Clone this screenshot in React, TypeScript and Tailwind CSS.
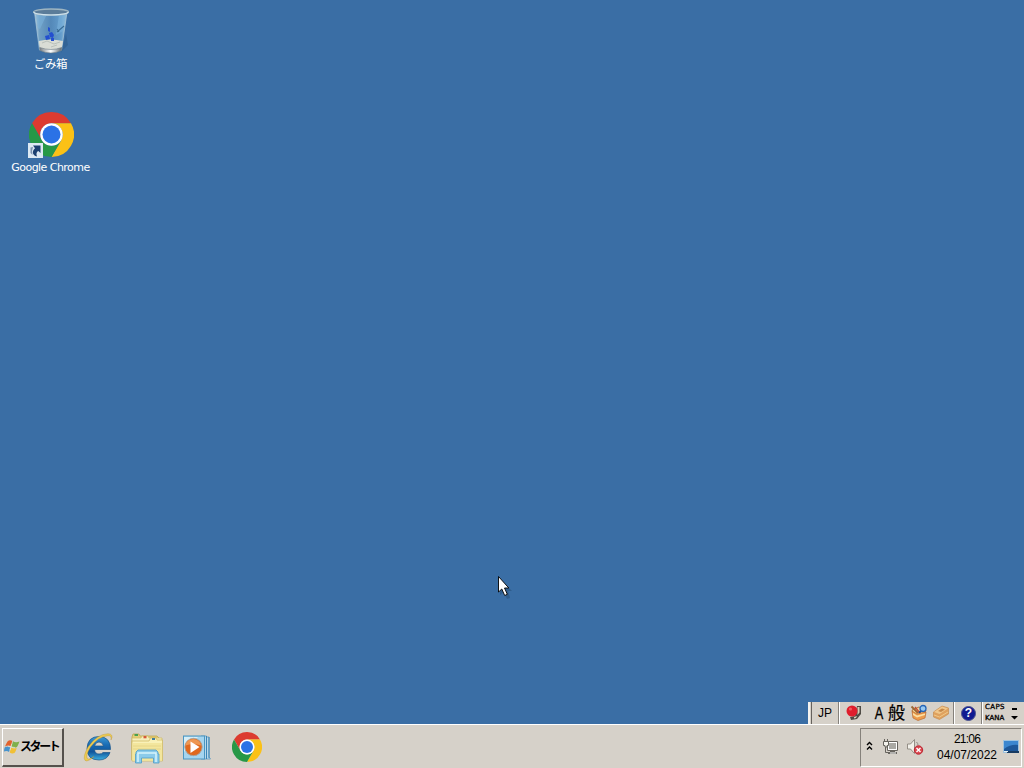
import React from "react";
import clsx from "clsx";

const ChromeIcon = ({ className }: { className?: string }) => (
  <svg viewBox="0 0 48 48" className={className}>
    <path fill="#dc3b30" d="M24 12H44.785A24 24 0 0 0 3.215 12L13.608 30A12 12 0 0 1 24 12Z" />
    <path fill="#fbc116" d="M44.785 12A24 24 0 0 1 24 48L34.392 30A12 12 0 0 0 24 12Z" />
    <path fill="#279847" d="M3.215 12A24 24 0 0 0 24 48L34.392 30A12 12 0 0 1 13.608 30Z" />
    <circle cx="24" cy="24" r="12" fill="#fff" />
    <circle cx="24" cy="24" r="9.6" fill="#2b72e6" />
  </svg>
);

const ShortcutArrow = ({ className }: { className?: string }) => (
  <svg viewBox="0 0 15 15" className={className}>
    <rect width="15" height="15" fill="#dde9f3" />
    <path fill="#1c4070" d="M5 2.500H12.500V10L10.300 8C8.500 9 8 10.500 9 13.500C4.500 12.500 3.500 8.500 7 5.200Z" />
    <path fill="#1c4070" d="M2.500 4.500L5 4L4 8L4.500 12L2.500 10Z" opacity=".5" />
  </svg>
);

const RecycleBinIcon = () => (
  <svg viewBox="0 0 40 48" className="h-12 w-10">
    <defs>
      <linearGradient id="bin" x1="0" x2="1">
        <stop offset="0" stopColor="#b4cfdf" />
        <stop offset=".16" stopColor="#6f9fc4" />
        <stop offset=".5" stopColor="#5488b8" />
        <stop offset=".82" stopColor="#649dcc" />
        <stop offset="1" stopColor="#a9c9dc" />
      </linearGradient>
      <linearGradient id="base" x1="0" x2="1">
        <stop offset="0" stopColor="#777d82" />
        <stop offset=".5" stopColor="#fff" />
        <stop offset="1" stopColor="#62696e" />
      </linearGradient>
    </defs>
    <path fill="#254f7c" opacity=".35" d="M31 44L37 38L35 27L30 46Z" />
    <path fill="url(#bin)" stroke="#a5c4d8" strokeWidth=".8" d="M3.500 5L8.500 43Q20 47 30.500 43L36 5Z" />
    <path fill="#79b1db" opacity=".6" d="M5 8L16 7L9 22L7 21ZM28 8L35 8L32 24L25 28Z" />
    <path fill="#d9dcd5" d="M7.800 34Q19 31 32 34L30.500 42Q20 45 8.700 41.500Z" />
    <path fill="none" stroke="#b9c0ba" d="M11 36L16 34L23 37L29 35M20 40L26 38" />
    <path fill="#234fd0" d="M17 20L19 21V25L17 24ZM18 26L21 25L23 28L22 31L19 30ZM14 29L18 28L19 32L15 33ZM20 31H23V34H20Z" />
    <path fill="none" stroke="#386b94" strokeWidth="1.100" d="M26 25L33 19M26 22L28 25" />
    <path fill="url(#base)" stroke="#6b7b85" strokeWidth=".6" d="M8.700 40.500Q20 44.500 30.800 40.500L30.300 43.500Q20 48.500 9 43.500Z" />
    <ellipse cx="20" cy="5" rx="17.500" ry="3" fill="#5b7c99" stroke="#9eb5c1" strokeWidth="1.300" />
    <path fill="none" stroke="#d0e3ee" strokeWidth="1.200" d="M3 5Q3 7.500 20 8Q37 7.500 37 5" />
  </svg>
);

const WindowsFlag = () => (
  <svg viewBox="0 0 16 16" className="h-4 w-4 shrink-0">
    <path fill="#e2622c" d="M3.500 2.500Q5.500 .3 8.300 1.800Q7.600 4.300 6.700 7.200Q4.500 5.700 1 7.500Q2 5 3.500 2.500Z" />
    <path fill="#7fb04b" d="M9 2.200Q11.500 4 15.500 2.500Q14.500 5.500 13 8Q10 9.200 7.400 7.600Q8.500 5 9 2.200Z" />
    <path fill="#4793cc" d="M.8 8.300Q4 6.800 6.500 8L5 13Q3 11.500 0 12.500Q0 10 .8 8.300Z" />
    <path fill="#f1c035" d="M7.200 8.500Q10 10 12.700 9Q12 12 10.500 14Q8 15.200 5.700 13.500Z" />
    <path stroke="#f8efd9" strokeWidth=".8" opacity=".7" d="M7.500 5L6 11M4 7.500L11 8.500" />
  </svg>
);

const IeIcon = () => (
  <svg viewBox="0 0 32 32" className="h-8 w-8">
    <defs>
      <linearGradient id="ie" x1="0" x2="0" y1="0" y2="1">
        <stop offset="0" stopColor="#3f9bd6" />
        <stop offset=".35" stopColor="#1a6db5" />
        <stop offset=".65" stopColor="#10559b" />
        <stop offset="1" stopColor="#3cb0e0" />
      </linearGradient>
    </defs>
    <path fill="url(#ie)" stroke="#155389" strokeWidth=".7" fillRule="evenodd" d="M28.500 18.500H12.500Q13 23 17 23Q20 23 21 21.500H28Q25.500 29 17 29Q5 29 5 17.500Q5.500 5.500 17 5.500Q28.700 5.800 28.500 18.500ZM12.500 15H21.500Q20.500 11 17 11Q13.500 11 12.500 15Z" />
    <path fill="#edcb50" stroke="#be942e" strokeWidth=".4" d="M29 9Q30 4.500 26 4.700Q16 5.500 8.500 16Q3 25 5.500 27.700Q7.500 29 12 25.500Q5.500 31.500 3 29.300Q.5 26 6 16Q15 3 26 2.700Q32 3 29 9Z" />
  </svg>
);

const ExplorerIcon = () => (
  <svg viewBox="0 0 34 34" className="h-[34px] w-[34px]">
    <path fill="#e6cf76" stroke="#bca650" strokeWidth=".8" d="M2 5L3 2H9L10 4H27L29 6V28H2Z" />
    <path fill="#49a050" d="M4.500 2H8V4H4.500Z" />
    <path fill="#f6eebb" stroke="#cfb962" strokeWidth=".7" d="M2 6H11L12 4H18L19 6H32V28H2Z" />
    <path fill="#d4593b" d="M13.500 4H16.500V6.300H13.500Z" />
    <path fill="#f9f1b8" stroke="#cdb65d" strokeWidth=".7" d="M2 9H19L20.500 6H26L27 8H32.500V29H2Z" />
    <path fill="#3f7c9e" d="M22 6H25V8H22Z" />
    <path fill="#f3e69d" d="M2.500 11H32V28.500H2.500Z" />
    <path stroke="#e7d688" d="M3 14H31M3 17H31" />
    <path fill="#8bcbea" stroke="#4c9cc9" strokeWidth=".8" d="M6 20L8 18H26L28 20V22H29V31H23.500V26H11.500V31H5.500V22H6Z" />
    <path fill="none" stroke="#d7f5fc" strokeWidth="1.500" d="M8 30V21H26V30" />
  </svg>
);

const MediaPlayerIcon = () => (
  <svg viewBox="0 0 30 28" className="h-7 w-[30px]">
    <path fill="#b9d9ea" stroke="#4b8fbb" strokeWidth=".7" d="M20 2H25.500V3H28V23L29.500 25H20Z" />
    <path stroke="#3c86b7" strokeWidth="1" d="M25.500 2V25M28 3V24" />
    <rect x="2.500" y="2" width="21" height="23" fill="#a5d5ef" stroke="#4b96c2" />
    <path fill="#d6eef7" d="M3 3H17L3 18Z" />
    <circle cx="12.500" cy="13" r="8.700" fill="#e0681d" stroke="#a6a4a0" strokeWidth=".9" />
    <path fill="#ee9752" d="M4.500 11.500Q5.500 5 12.500 5Q19.500 6 20 11.500Q12 9 4.500 11.500Z" />
    <path fill="#fff" d="M9.500 7.500L18.500 13L9.500 19Z" />
  </svg>
);

const ImeIcon = () => (
  <svg viewBox="0 0 18 18" className="h-[18px] w-[18px]">
    <path fill="#4f4b45" d="M12 2H16V10L12 15L6 16L5 13L10 12Z" />
    <path fill="#d8cfb7" d="M12.500 3H14.500V8.500L12.500 11V8ZM9 13L12 12L11 14L9 14.500Z" />
    <circle cx="7" cy="7" r="5.500" fill="#df1e2c" />
    <circle cx="5.500" cy="5" r="1.600" fill="#f35a61" />
  </svg>
);

const ToolsIcon = () => (
  <svg viewBox="0 0 18 18" className="h-[18px] w-[18px]">
    <path fill="#f5d69b" stroke="#a96227" strokeWidth=".8" d="M2 6L9 3L16 6L15 9L8 11L3 9Z" />
    <path stroke="#9b6631" strokeWidth="1.800" d="M1.500 2.500L8 9" />
    <path stroke="#c44935" strokeWidth="1.200" d="M5 3L10 9" />
    <path stroke="#244985" strokeWidth="2" d="M9 9L12 6" />
    <circle cx="13" cy="4.500" r="3" fill="#98c8ef" stroke="#2464b6" strokeWidth="1.300" />
    <path fill="#ee9c4c" stroke="#b66c35" strokeWidth=".7" d="M2 7L7 10L16 8L15 14L8 16.500L3 14Z" />
    <path fill="#fbe0a6" d="M3 9L7 11.500L15 9.500V11L7 13.500L3 11Z" />
  </svg>
);

const PadIcon = () => (
  <svg viewBox="0 0 18 18" className="h-[18px] w-[18px]">
    <path fill="#dfa15e" stroke="#c98f51" strokeWidth=".7" d="M1.500 8L10 2L16.500 4V10L7.500 15.500L1.500 13Z" />
    <path fill="#f0c78b" d="M2 8L10 2.500L16 4.500L7.500 10Z" />
    <path fill="#c58849" d="M6 7L10 4.500L13 5.500L9 8Z" />
    <path stroke="#f0c888" d="M2 11L7.500 13L16 8" fill="none" />
  </svg>
);

const NetworkIcon = () => (
  <svg viewBox="0 0 17 17" className="h-[17px] w-[17px]">
    <path fill="#fff" stroke="#67645e" d="M5.500 2.500H15.500V11.500H5.500Z" />
    <path fill="#aaa9a4" d="M7 4H14V10H7Z" />
    <path fill="#67645e" d="M8 12H13V13H15V15H6V13H8Z" />
    <path fill="#f4f3ed" stroke="#67645e" d="M1.500 2.500H6.500V6.500H5V8H3V6.500H1.500Z" />
    <path fill="none" stroke="#67645e" d="M2.500 0V2M5.500 0V2M3.500 8V13.500H7" />
    <path stroke="#fff" d="M8 14H14" />
  </svg>
);

const VolumeIcon = () => (
  <svg viewBox="0 0 18 18" className="h-[18px] w-[18px]">
    <path fill="#f3f1ea" stroke="#8b867e" strokeWidth=".9" d="M1.500 6H4.500L8.500 1.500V15.500L4.500 11H1.500Z" />
    <path fill="none" stroke="#8c8981" d="M10.500 4Q12 5.500 12 7" />
    <circle cx="12.500" cy="12" r="4.200" fill="#dc4850" stroke="#b92631" />
    <path stroke="#fff" strokeWidth="1.400" d="M10.500 10L14.500 14M14.500 10L10.500 14" />
  </svg>
);

const ShowDesktopIcon = () => (
  <svg viewBox="0 0 16 16" className="h-4 w-4">
    <path fill="#9fc3df" d="M0 1H16V14H0Z" />
    <path fill="#1d5799" d="M1 2H15V13H1Z" />
    <path fill="#3b86cf" d="M1 2H15V6Q8 5 1 10Z" />
    <path fill="#173b62" d="M4 12H16V14H4Z" />
    <path fill="#e6f0f4" d="M1 12H5V13H1Z" />
  </svg>
);

const Divider = () => <div className="h-[22px] w-0.5 shrink-0 border-l border-[#85817b] bg-white" />;

const LanguageBar = () => (
  <div className="absolute right-0 bottom-0 flex h-[22px] w-[216px] items-center bg-[#d6d1c9] text-black">
    <div className="h-full w-0.5 bg-[#f5f3ef]" />
    <div className="ml-px h-full w-px bg-[#66625d]" />
    <span className="w-[26px] text-center text-[12px] leading-none">JP</span>
    <Divider />
    <div className="ml-[5px] shrink-0"><ImeIcon /></div>
    <span className="ml-[10px] w-3 origin-center scale-x-75 text-center text-[17px] leading-none [-webkit-text-stroke:0.3px_black]">A</span>
    <span className="ml-[3px] text-[17px] leading-none [-webkit-text-stroke:0.2px_black]">般</span>
    <div className="ml-[5px] shrink-0"><ToolsIcon /></div>
    <div className="ml-[4px] shrink-0"><PadIcon /></div>
    <div className="ml-[3px]"><Divider /></div>
    <div className="ml-[6px] flex h-[15px] w-[15px] shrink-0 items-center justify-center rounded-full border border-[#4b538d] bg-[#101b91] text-[12px] leading-none font-bold text-white">?</div>
    <div className="ml-[5px]"><Divider /></div>
    <div className="ml-[2px] flex w-[22px] shrink-0 flex-col font-['DejaVu_Sans',sans-serif] text-[7px] leading-[11px] [-webkit-text-stroke:0.3px_black]">
      <span className="tracking-[0.4px]">CAPS</span>
      <span>KANA</span>
    </div>
    <svg viewBox="0 0 7 16" className="ml-[4px] h-4 w-[7px] shrink-0">
      <path d="M1 3H6V5H1ZM0 11H7L3.500 14.500Z" />
    </svg>
  </div>
);

const DesktopIcon = ({ label, className, children }: { label: string; className?: string; children: React.ReactNode }) => (
  <div className="flex w-[101px] flex-col items-center">
    {children}
    <span className={clsx("whitespace-nowrap text-white", className)}>{label}</span>
  </div>
);

const Taskbar = () => (
  <div className="flex h-11 shrink-0 items-center border-t border-white bg-[#d6d1c9] text-black">
    <button className="mt-px ml-0.5 flex h-[39px] w-[62px] shrink-0 items-center border-t border-r-2 border-b-2 border-l border-t-white border-r-[#55514c] border-b-[#55514c] border-l-white pl-px">
      <WindowsFlag />
      <span className="text-[12px] leading-none font-bold tracking-[-2.4px] whitespace-nowrap">スタート</span>
    </button>
    <div className="ml-[18px] flex items-center">
      <IeIcon />
      <div className="mt-1 ml-4"><ExplorerIcon /></div>
      <div className="mt-0.5 ml-[17px]"><MediaPlayerIcon /></div>
      <ChromeIcon className="ml-[21px] h-[30px] w-[30px]" />
    </div>
    <div className="mt-px mr-0.5 ml-auto flex h-[39px] w-[162px] items-center border border-t-[#85817b] border-r-white border-b-white border-l-[#85817b]">
      <svg viewBox="0 0 7 10" className="mb-0.5 ml-[5px] h-2.5 w-[7px]">
        <path fill="none" stroke="#000" strokeWidth="1.400" d="M1 4L3.500 1.500L6 4M1 8.500L3.500 6L6 8.500" />
      </svg>
      <div className="ml-[9px] shrink-0"><NetworkIcon /></div>
      <div className="ml-[7px] shrink-0"><VolumeIcon /></div>
      <div className="ml-[12px] flex w-[62px] shrink-0 flex-col items-center text-[12px] leading-4 whitespace-nowrap">
        <span className="tracking-[-0.8px]">21:06</span>
        <span>04/07/2022</span>
      </div>
      <div className="ml-[5px] shrink-0"><ShowDesktopIcon /></div>
    </div>
  </div>
);

const App = () => (
  <div className="flex h-screen w-screen flex-col overflow-hidden bg-[#3a6ea5] font-['Liberation_Sans','Noto_Sans_CJK_JP',sans-serif]">
    <div className="relative flex-1">
      <div className="flex flex-col gap-[39px] pt-[7px]">
        <DesktopIcon label="ごみ箱" className="text-[11.5px] leading-[18px] tracking-[-0.3px]">
          <RecycleBinIcon />
        </DesktopIcon>
        <DesktopIcon label="Google Chrome" className="pt-px font-['DejaVu_Sans',sans-serif] text-[11px] leading-5 tracking-[-0.55px]">
          <div className="relative ml-px">
            <ChromeIcon className="h-[45px] w-[45px]" />
            <ShortcutArrow className="absolute bottom-[-1px] -left-px h-[15px] w-[15px]" />
          </div>
        </DesktopIcon>
      </div>
      <svg viewBox="0 0 16 24" className="absolute top-[575px] left-[497px] h-6 w-4">
        <path fill="#244b73" opacity=".5" d="M3 4V20L7 17L10 24L13 23L11 16H15Z" />
        <path fill="#fff" stroke="#000" strokeWidth=".9" d="M1.500 1.500V17L4.800 14L7.700 20.500L10.300 19.300L7.500 13H11.800Z" />
      </svg>
      <LanguageBar />
    </div>
    <Taskbar />
  </div>
);

export default App;
